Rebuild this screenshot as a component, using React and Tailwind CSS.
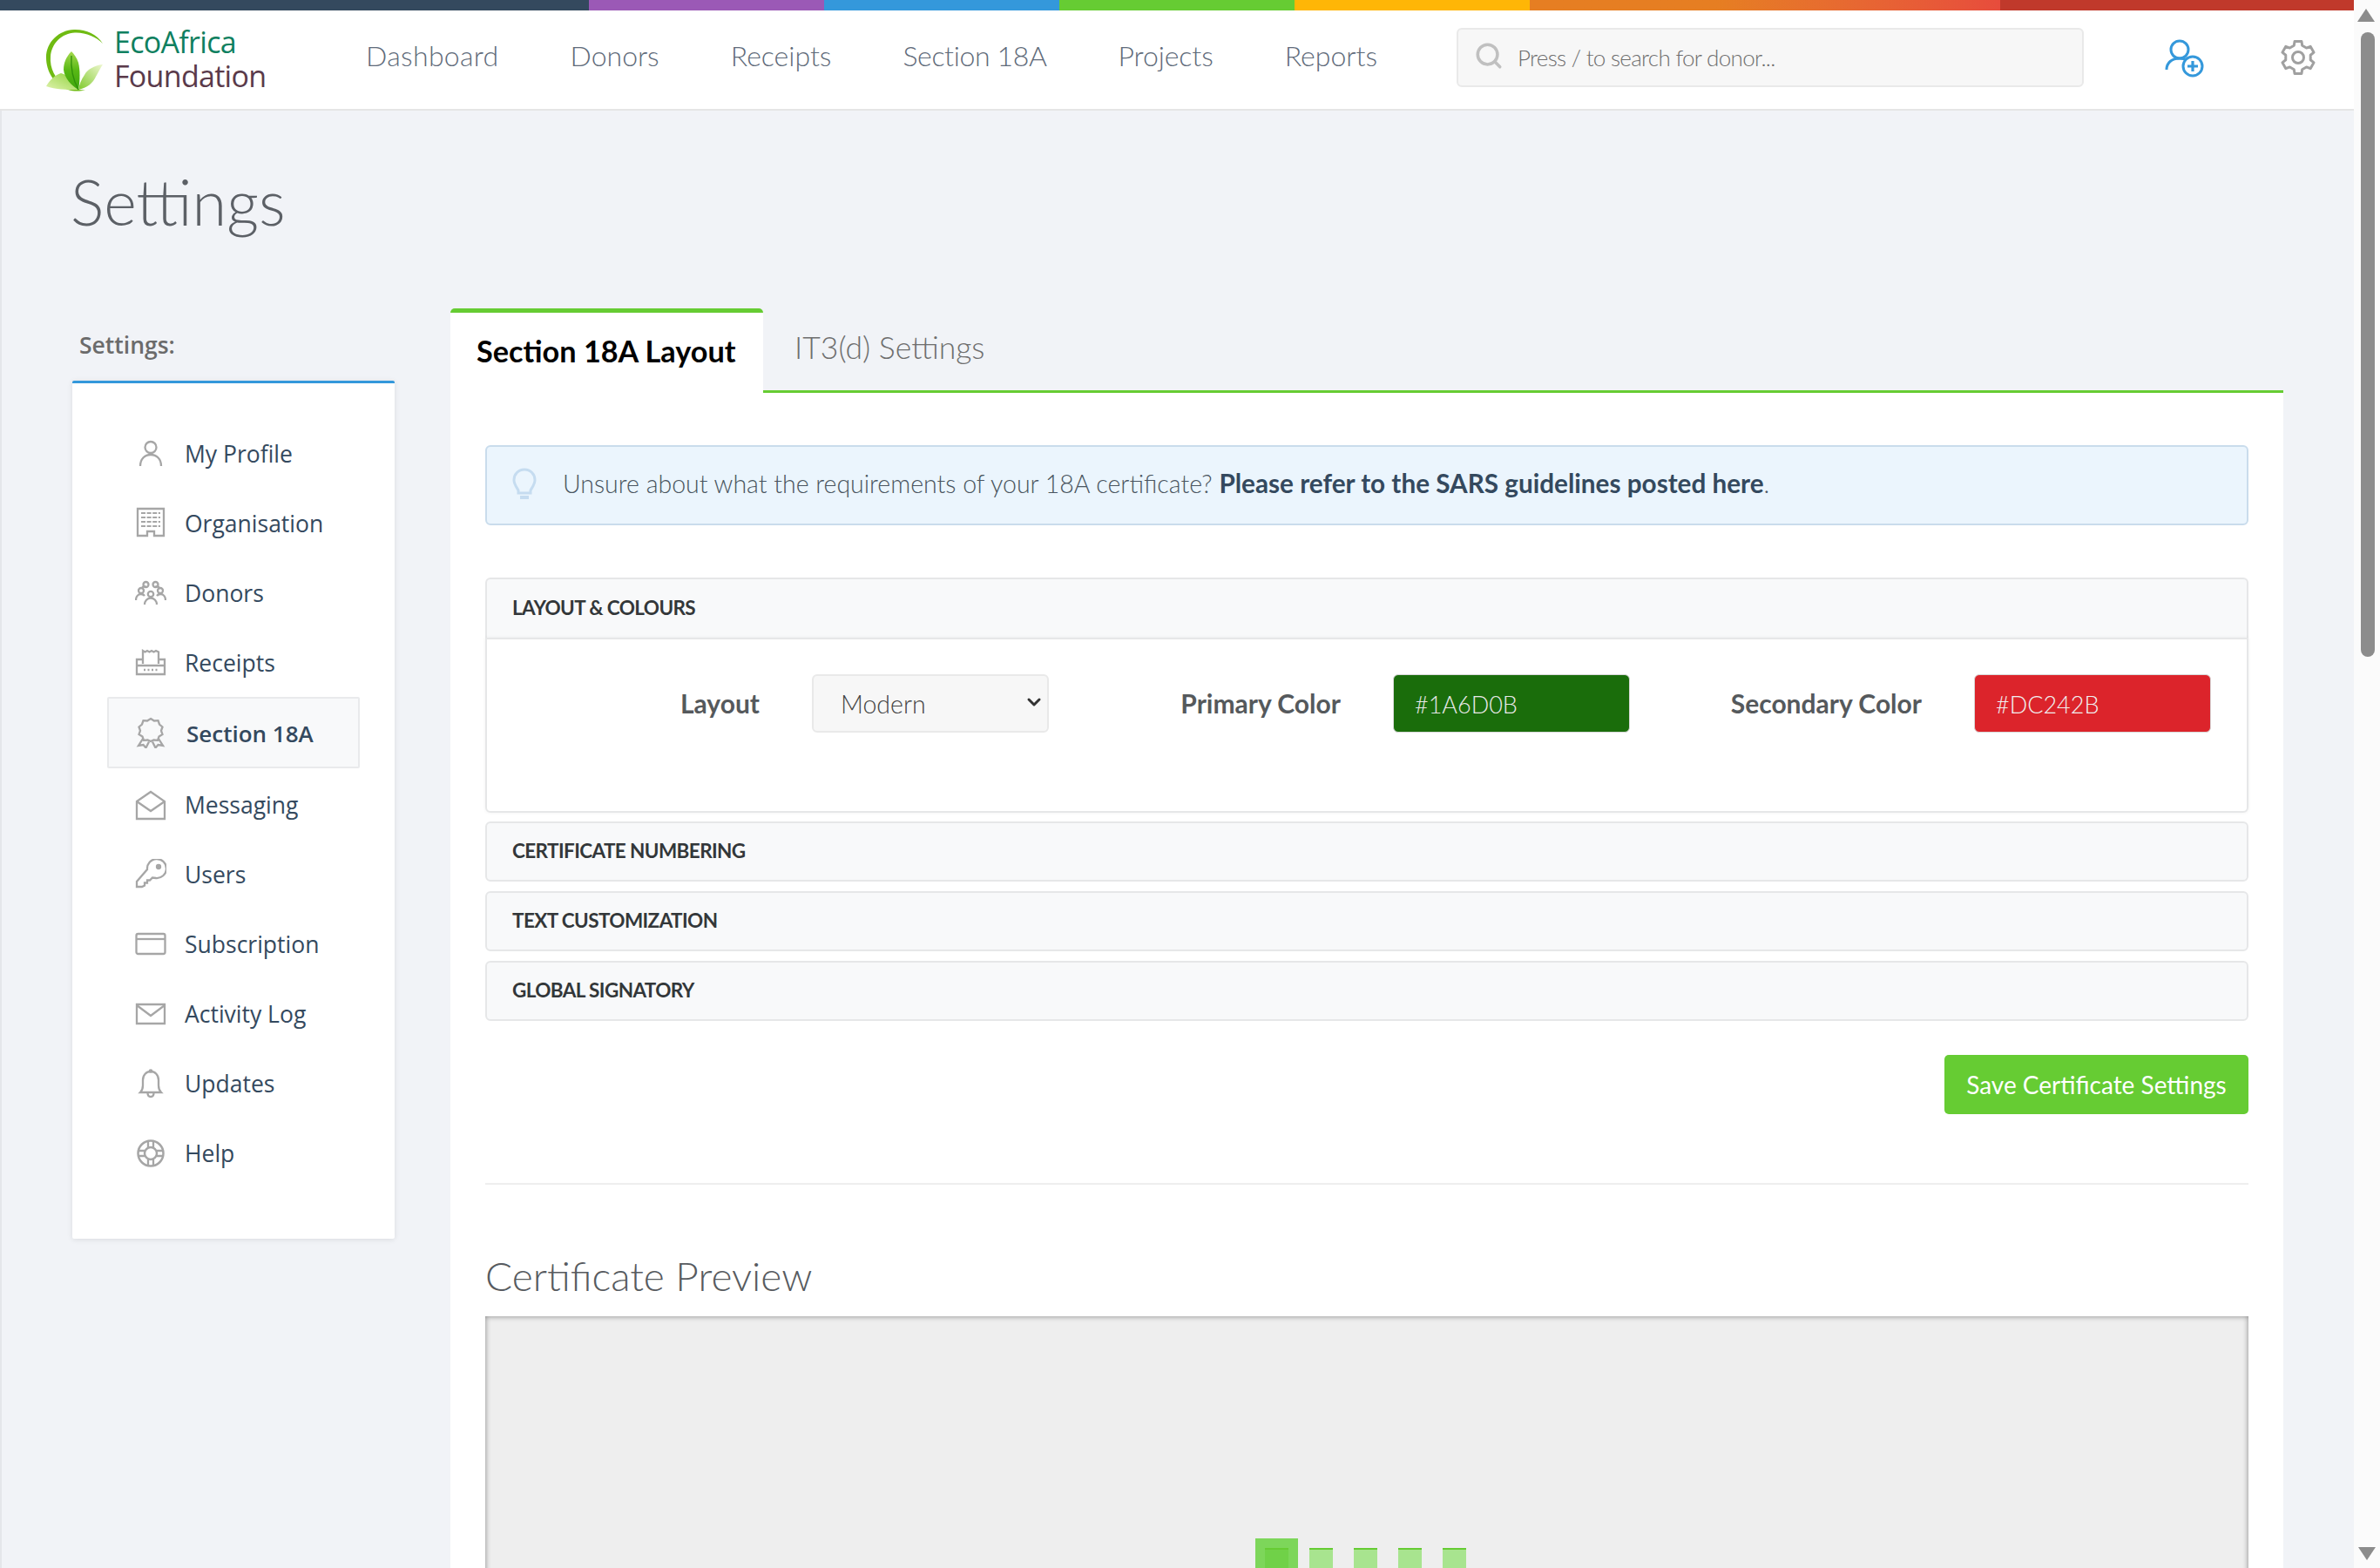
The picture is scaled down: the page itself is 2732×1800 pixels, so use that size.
import React from 'react';
import { Search, ChevronDown } from 'lucide-react';

function Icon({ children, className = '' }) {
  return (
    <svg width="36" height="36" viewBox="0 0 36 36" fill="none" stroke="#a6a6a6" strokeWidth="2.300" className={`shrink-0 ${className}`}>
      {children}
    </svg>
  );
}

const icons = {
  profile: (
    <Icon>
      <circle cx="18" cy="10.5" r="6.5" />
      <path d="M6 32c0-8 5-13 12-13s12 5 12 13" />
    </Icon>
  ),
  org: (
    <Icon className="-mt-[4px]">
      <path d="M3 3h30v31H22v-5h-8v5H3z" />
      <path d="M7 8h22M7 13h22M7 18h22M7 23h22" strokeDasharray="5 1.6" strokeWidth="1.8" />
    </Icon>
  ),
  donors: (
    <Icon>
      <circle cx="12.5" cy="8" r="3" />
      <circle cx="23.5" cy="8" r="3" />
      <circle cx="7" cy="15" r="3" />
      <circle cx="29" cy="15" r="3" />
      <circle cx="18" cy="19" r="3.2" />
      <path d="M1 26c0-4 2.500-7 6-7 2 0 3 .6 4 2M35 26c0-4-2.500-7-6-7-2 0-3 .6-4 2M11 31c0-4 3-7.500 7-7.500s7 3.500 7 7.500M8 12c1-2 2.500-2 4.500-1.500M28 12c-1-2-2.500-2-4.500-1.500" />
    </Icon>
  ),
  receipts: (
    <Icon>
      <path d="M9 19V4l2.500 1.500L14 4l2.500 1.500L19 4l2.500 1.500L24 4l3 1.500V19" />
      <path d="M9 14H2v17h32V14h-7M2 21h32" />
      <path d="M10 26h16" strokeDasharray="2 2.500" />
    </Icon>
  ),
  award: (
    <Icon>
      <path d="M18 2l4 2.500 4.500-.3 1.500 4.300 3.500 3-1.500 4.300 1.500 4.200-4 2.500-1.500 4.300-4.500-.3-3.500 1.500-3.500-1.500-4.500.3-1.500-4.300-4-2.500 1.500-4.200L4.500 11.500l3.500-3 1.500-4.300 4.500.3z" />
      <path d="M9 25l-5 8 5.500-1 3 3.500 3.500-7M27 25l5 8-5.500-1-3 3.500-3.500-7" />
    </Icon>
  ),
  messaging: (
    <Icon>
      <path d="M2 14L18 3l16 11v20H2z" />
      <path d="M2 14l16 11 16-11" />
    </Icon>
  ),
  key: (
    <Icon>
      <path d="M14 12a11 11 0 1 1 10 10l-4-.5-3 3h-3v3h-3v3l-3 1.500H2v-6z" />
      <circle cx="27" cy="9" r="2" fill="#a6a6a6" />
    </Icon>
  ),
  card: (
    <Icon>
      <rect x="1.500" y="6" width="33" height="23" rx="2" />
      <path d="M2 12h32" />
    </Icon>
  ),
  mail: (
    <Icon>
      <path d="M2 7h32v22H2z" />
      <path d="M2 8l16 12L34 8" />
    </Icon>
  ),
  bell: (
    <Icon>
      <path d="M6 28c2-2 3-4 3-8v-6c0-6 4-10 9-10s9 4 9 10v6c0 4 1 6 3 8z" />
      <circle cx="18" cy="3.500" r="1.200" fill="#a6a6a6" />
      <path d="M14.500 28.500c0 6 7 6 7 0" />
    </Icon>
  ),
  help: (
    <Icon>
      <circle cx="18" cy="18" r="14.500" strokeWidth="2.500" />
      <circle cx="18" cy="18" r="7" strokeWidth="2.500" />
      <path d="M15 4v7.500M21 4v7.500M15 24.500V32M21 24.500V32M3.500 15H11M3.500 21H11M25 15h7.500M25 21h7.500" />
    </Icon>
  ),
};

const sideItems = [
  ['My Profile', 'profile'],
  ['Organisation', 'org'],
  ['Donors', 'donors'],
  ['Receipts', 'receipts'],
  ['Section 18A', 'award', true],
  ['Messaging', 'messaging'],
  ['Users', 'key'],
  ['Subscription', 'card'],
  ['Activity Log', 'mail'],
  ['Updates', 'bell'],
  ['Help', 'help'],
];

const navItems = [
  ['Dashboard', 'tracking-[0.33px]'],
  ['Donors', ''],
  ['Receipts', ''],
  ['Section 18A', 'tracking-[-0.36px]'],
  ['Projects', 'tracking-[-0.1px]'],
  ['Reports', ''],
];

// six toothed gear outline
function gearPath() {
  const pt = (deg, r) => {
    const a = (deg * Math.PI) / 180;
    return `${(22 + r * Math.cos(a)).toFixed(2)} ${(22 + r * Math.sin(a)).toFixed(2)}`;
  };
  let d = '';
  for (let k = 0; k < 6; k++) {
    const a = k * 60 - 90;
    d += `${k === 0 ? 'M' : 'L'}${pt(a - 19, 14.5)}L${pt(a - 12, 19)}L${pt(a + 12, 19)}L${pt(a + 19, 14.5)}`;
  }
  return d + 'Z';
}

function Logo() {
  return (
    <div className="flex items-center w-[420px] pl-[52px]">
      <svg width="68" height="74" viewBox="52 30 68 74" className="shrink-0">
        <defs>
          <linearGradient id="leafA" x1="0" y1="0" x2="0" y2="1">
            <stop offset="0" stopColor="#a5d94e" />
            <stop offset="0.5" stopColor="#58b815" />
            <stop offset="1" stopColor="#3da50c" />
          </linearGradient>
          <linearGradient id="leafB" x1="1" y1="0" x2="0" y2="1">
            <stop offset="0" stopColor="#eef7cf" />
            <stop offset="1" stopColor="#7fca2c" />
          </linearGradient>
          <linearGradient id="leafC" x1="0" y1="1" x2="1" y2="0">
            <stop offset="0" stopColor="#dff2ad" />
            <stop offset="1" stopColor="#8fd23c" />
          </linearGradient>
        </defs>
        <path d="M118 48C111 37 98 31.500 85 32C68 32.500 53 46 53 64C53 80 62 95 78 101C85 103 92 103 98 101C90 102 82 100 75 96C63 89 57 76 58 63C59 48 71 36 86 35.500C98 35 110 40 118 48Z" fill="#6fbb12" />
        <path d="M53 97C57 90 63 84 70 82C78 84 86 92 90 101C78 101 63 101 53 97Z" fill="url(#leafC)" />
        <path d="M118 72C108 73 100 78 97 84C93 90 91 95 90 101C100 99 107 93 110 86C113 81 115 76 118 72Z" fill="url(#leafB)" />
        <path d="M82 57C76 63 73 70 73 78C74 88 82 96 90 101C92 90 92 78 90 70C88 64 85 60 82 57Z" fill="url(#leafA)" />
        <path d="M82 62C81 76 84 90 90 101" stroke="#2f8f0a" strokeWidth="1.300" fill="none" />
      </svg>
      <div className="ml-[11px] mb-[2px] font-['Open_Sans',sans-serif] text-[34px] leading-[39px] tracking-[-0.7px]">
        <div className="text-[#0f8060]">EcoAfrica</div>
        <div className="text-[#5a3a4a]">Foundation</div>
      </div>
    </div>
  );
}

function AccordionHead({ title, open }) {
  return (
    <div className={`flex items-center h-[69px] pl-[29px] pb-[2px] bg-[#f8f9fa] border-2 border-[#e6e7e8] rounded-[6px] ${open ? 'rounded-b-none border-b-0' : ''}`}>
      <span className="font-['Lato',sans-serif] text-[22.5px] font-bold uppercase text-[#333739] tracking-[-0.6px]">{title}</span>
    </div>
  );
}

export default function App() {
  return (
    <div className="flex w-[2732px] h-[1800px] overflow-hidden font-['Open_Sans',sans-serif]">
      <div className="w-[2702px] shrink-0 flex flex-col bg-[#f1f3f7]">
        <div className="flex h-3 shrink-0">
          <div className="w-[676px] bg-[#34495e]" />
          <div className="w-[270px] bg-[#9b59b6]" />
          <div className="w-[270px] bg-[#3498db]" />
          <div className="w-[270px] bg-[#66cc33]" />
          <div className="w-[270px] bg-[#ffb606]" />
          <div className="w-[540px] bg-gradient-to-r from-[#e67e22] from-40% to-[#e74c3c]" />
          <div className="flex-1 bg-[#c0392b]" />
        </div>

        <header className="flex items-center h-[115px] shrink-0 bg-white border-b-2 border-[#e5e5e5]">
          <Logo />
          <nav className="flex gap-[82px] w-[1252px] pb-[9px] font-['Lato',sans-serif] text-[32px] font-light text-[#5f6b7a]">
            {navItems.map(([n, extra]) => (
              <span key={n} className={extra}>{n}</span>
            ))}
          </nav>
          <div className="relative w-[720px] mb-[5px]">
            <Search className="absolute left-[20px] top-[15px] w-[34px] h-[34px] text-[#c0c0c0]" strokeWidth={2.500} />
            <input
              readOnly
              placeholder="Press / to search for donor..."
              className="w-full h-[68px] pl-[68px] bg-[#f7f7f7] border-2 border-[#e9e9e9] rounded-[6px] font-['Lato',sans-serif] font-light text-[26px] tracking-[-0.7px] placeholder:text-[#6f6f6f] outline-none"
            />
          </div>
          <svg width="48" height="48" viewBox="0 0 48 48" fill="none" stroke="#3498db" strokeWidth="3" className="ml-[92px] shrink-0">
            <circle cx="18" cy="12" r="10" />
            <path d="M3 35c0-8 6-13 15-13 3 0 6 .6 8 2" />
            <circle cx="33" cy="31" r="11" fill="#fff" />
            <path d="M33 25v12M27 31h12" strokeWidth="3.200" />
          </svg>
          <svg width="44" height="44" viewBox="0 0 44 44" fill="none" stroke="#a0a0a0" strokeWidth="3" strokeLinejoin="round" className="ml-[84px] mb-[5px] shrink-0">
            <path d={gearPath()} />
            <circle cx="22" cy="22" r="6.500" />
          </svg>
        </header>

        <main className="flex-1 border-l-2 border-[#e4e6ea]">
          <h1 className="pl-[79px] mt-[54px] h-[173px] font-['Lato',sans-serif] font-light text-[72px] leading-[100px] text-[#5c6066]">Settings</h1>

          <div className="flex pl-[81px] gap-[64px]">
            <aside className="w-[370px] shrink-0 pt-[24px]">
              <div className="pl-[8px] h-[36px] text-[26.500px] leading-[36px] font-semibold text-[#6b6b6b]">Settings:</div>
              <div className="mt-[23px] pt-[41px] pb-[58px] px-[40px] bg-white border-t-[3px] border-[#3498db] rounded-[2px] shadow-[0_1px_6px_rgba(0,0,0,0.1)]">
                {sideItems.map(([label, icon, active]) => (
                  <div
                    key={label}
                    className={`flex items-center text-[#34495e] ${
                      active
                        ? 'h-[82px] -mt-px mb-[2px] pl-[30px] gap-[23px] bg-[#f8f9fa] border-2 border-[#e9eaec] rounded-[2px] font-semibold text-[26px]'
                        : 'h-[80px] pl-[32px] gap-[21px] text-[26.500px]'
                    }`}
                  >
                    {icons[icon]}
                    <span className="pt-[2px]">{label}</span>
                  </div>
                ))}
              </div>
            </aside>

            <section className="w-[2104px] shrink-0">
              <div className="flex items-end">
                <div className="w-[359px] h-[97px] flex items-center pl-[30px] pb-[5px] bg-white border-t-[5px] border-[#66cc33] rounded-t-[5px] font-['Lato',sans-serif] font-bold text-[34.250px] text-black">
                  Section 18A Layout
                </div>
                <div className="flex-1 h-[97px] flex items-center pl-[36px] pb-[4px] border-b-[3px] border-[#66cc33] font-['Lato',sans-serif] font-light text-[35.500px] text-[#6e6e6e]">
                  IT3(d) Settings
                </div>
              </div>

              <div className="h-[1400px] px-[40px] pt-[60px] bg-white">
                <div className="flex items-center h-[92px] pl-[29px] pb-[3px] bg-[#ebf5fd] border-2 border-[#c9dcec] rounded-[6px]">
                  <svg width="28" height="38" viewBox="0 0 28 38" fill="none" stroke="#c5dcf0" strokeWidth="3" className="shrink-0">
                    <path d="M14 2C7 2 2 7.500 2 14c0 5 3 8 5 12v3h14v-3c2-4 5-7 5-12 0-6.500-5-12-12-12z" />
                    <path d="M9 34h10" strokeWidth="4" />
                  </svg>
                  <p className="ml-[30px] font-['Lato',sans-serif] font-light text-[28.500px] text-[#4a5560]">
                    Unsure about what the requirements of your 18A certificate?{' '}
                    <a className="font-bold text-[#34495e] text-[29.700px]">Please refer to the SARS guidelines posted here</a>.
                  </p>
                </div>

                <div className="mt-[60px]">
                  <AccordionHead title="Layout & Colours" open />
                  <div className="flex h-[201px] pt-[40px] pl-[41px] bg-white border-2 border-[#e6e7e8] rounded-b-[6px] shadow-[0_0_4px_rgba(0,0,0,0.06)]">
                    <label className="w-[272px] h-[67px] flex items-center justify-end font-['Lato',sans-serif] font-bold text-[30px] text-[#55595c]">Layout</label>
                    <div className="relative ml-[60px] w-[272px]">
                      <select defaultValue="Modern" className="appearance-none w-full h-[67px] pl-[31px] pt-[2px] bg-[#f7f7f7] border-2 border-[#e9e9e9] rounded-[6px] font-['Lato',sans-serif] font-light text-[28.500px] text-[#444]">
                        <option>Modern</option>
                      </select>
                      <ChevronDown className="absolute right-[5px] top-[20px] w-[24px] h-[24px] text-[#333]" strokeWidth={3} />
                    </div>
                    <label className="w-[335px] h-[67px] flex items-center justify-end font-['Lato',sans-serif] font-bold text-[30px] text-[#55595c]">Primary Color</label>
                    <input readOnly value="#1A6D0B" className="ml-[60px] w-[272px] h-[67px] pl-[24px] pt-[2px] bg-[#1a6d0b] border border-[#d8d8d8] rounded-[6px] font-['Lato',sans-serif] font-light text-[27px] text-[#e8e8e8] outline-none" />
                    <label className="w-[335px] h-[67px] flex items-center justify-end font-['Lato',sans-serif] font-bold text-[30px] text-[#55595c]">Secondary Color</label>
                    <input readOnly value="#DC242B" className="ml-[60px] w-[272px] h-[67px] pl-[24px] pt-[2px] bg-[#dc242b] border border-[#d8d8d8] rounded-[6px] font-['Lato',sans-serif] font-light text-[27px] text-[#f0f0f0] outline-none" />
                  </div>
                </div>

                <div className="mt-[10px] flex flex-col gap-[11px]">
                  <AccordionHead title="Certificate Numbering" />
                  <AccordionHead title="Text Customization" />
                  <AccordionHead title="Global Signatory" />
                </div>

                <div className="flex justify-end mt-[39px]">
                  <button className="w-[349px] h-[68px] bg-[#66cc33] rounded-[5px] font-['Lato',sans-serif] text-[28px] text-white">Save Certificate Settings</button>
                </div>

                <div className="mt-[79px] h-[2px] bg-[#eeeeee]" />

                <h2 className="mt-[77px] h-[56px] font-['Lato',sans-serif] font-light text-[46px] leading-[56px] text-[#575b60]">Certificate Preview</h2>

                <div className="mt-[18px] h-[600px] pt-[266px] pl-[895px] flex items-start gap-[24px] bg-[#eeeeee] shadow-[inset_0_0_6px_rgba(0,0,0,0.45)]">
                  <div className="w-[27px] h-[27px] bg-[#70d148] border-t-[2px] border-[#66cc33] shadow-[0_0_0_11px_#7dd65a]" />
                  <div className="w-[27px] h-[27px] bg-[#a8e48f] border-t-[2px] border-[#66cc33]" />
                  <div className="w-[27px] h-[27px] bg-[#a8e48f] border-t-[2px] border-[#66cc33]" />
                  <div className="w-[27px] h-[27px] bg-[#a8e48f] border-t-[2px] border-[#66cc33]" />
                  <div className="w-[27px] h-[27px] bg-[#a8e48f] border-t-[2px] border-[#66cc33]" />
                </div>
              </div>
            </section>
          </div>
        </main>
      </div>

      <div className="relative w-[30px] shrink-0 bg-[#fbfbfb]">
        <div className="absolute left-[4px] top-[10px] w-0 h-0 border-x-[10px] border-x-transparent border-b-[15px] border-b-[#8c8c8c]" />
        <div className="absolute left-[8px] top-[37px] w-[16px] h-[717px] rounded-full bg-[#8c8c8c]" />
        <div className="absolute left-[5px] top-[1776px] w-0 h-0 border-x-[10px] border-x-transparent border-t-[15px] border-t-[#8c8c8c]" />
      </div>
    </div>
  );
}
